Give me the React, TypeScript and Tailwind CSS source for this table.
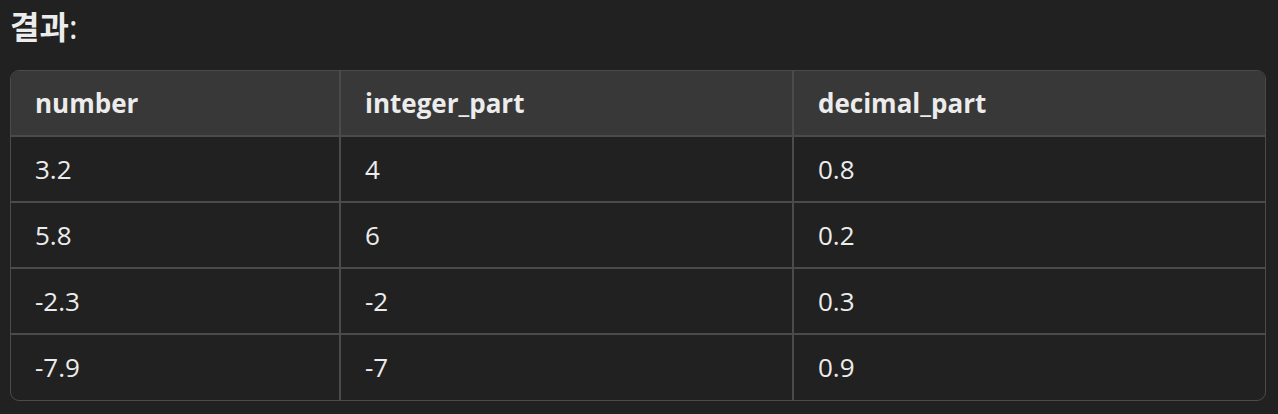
const rows = [
  ["3.2", "4", "0.8"],
  ["5.8", "6", "0.2"],
  ["-2.3", "-2", "0.3"],
  ["-7.9", "-7", "0.9"],
];

export default function App() {
  return (
    <div className="min-h-[414px] w-[1278px] bg-[#212121] px-[10px] pt-[6px] text-[#ececec] font-['Open_Sans','Noto_Sans_CJK_KR',sans-serif]">
      <h2 className="text-[32px] font-bold leading-[42px] font-['Noto_Sans','Noto_Sans_CJK_KR',sans-serif]">
        결과<span className="font-normal">:</span>
      </h2>
      <div className="mt-[22px] w-[1256px] overflow-hidden rounded-[9px] border border-[#4b4b4b]">
        <table className="w-full table-fixed border-collapse text-[26px]">
          <colgroup>
            <col className="w-[329px]" />
            <col className="w-[453px]" />
            <col />
          </colgroup>
          <thead className="bg-[#383838]">
            <tr className="h-[65px]">
              <th className="px-[24px] text-left font-bold">number</th>
              <th className="border-l-2 border-[#4b4b4b] px-[24px] text-left font-bold">integer_part</th>
              <th className="border-l-2 border-[#4b4b4b] px-[24px] text-left font-bold">decimal_part</th>
            </tr>
          </thead>
          <tbody>
            {rows.map((r, i) => (
              <tr key={i} className="h-[66px] border-t-2 border-[#4b4b4b]">
                <td className="px-[24px]">{r[0]}</td>
                <td className="border-l-2 border-[#4b4b4b] px-[24px]">{r[1]}</td>
                <td className="border-l-2 border-[#4b4b4b] px-[24px]">{r[2]}</td>
              </tr>
            ))}
          </tbody>
        </table>
      </div>
    </div>
  );
}
